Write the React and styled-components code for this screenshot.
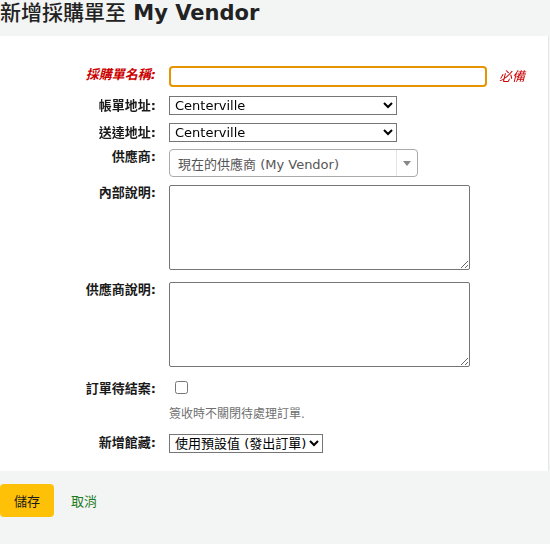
import React from "react";
import styled, { createGlobalStyle } from "styled-components";

const Global = createGlobalStyle`
  html, body { margin: 0; padding: 0; background: #f3f4f4; }
  body { font-family: "DejaVu Sans", "Noto Sans CJK TC", sans-serif; color: #1a1a1a; font-size: 13px; }
`;

const Page = styled.div`
  width: 550px;
  height: 544px;
  background: #f3f4f4;
  overflow: hidden;
`;

const Title = styled.h1`
  margin: 0;
  height: 36px;
  box-sizing: border-box;
  font-size: 21px;
  line-height: 26px;
  font-weight: bold;
  color: #222;
  white-space: nowrap;
  font-family: "DejaVu Sans", "Noto Sans CJK TC", sans-serif;
`;

const Cjk = styled.span`
  font-weight: 500;
`;

const Panel = styled.div`
  background: #fff;
  border-right: 1px solid #e6e6e6;
  width: 549px;
  height: 435px;
  box-sizing: border-box;
  padding-top: 30px;
`;

const Row = styled.div`
  display: flex;
  align-items: flex-start;
  margin-top: ${(p) => p.$mt || 0}px;
`;

const Label = styled.label`
  width: 156px;
  flex: none;
  text-align: right;
  font-weight: bold;
  font-size: 13px;
  line-height: 15px;
  padding-top: ${(p) => p.$pt ?? 0}px;
  margin-right: 13px;
  color: ${(p) => (p.$required ? "#cc0000" : "#1a1a1a")};
  font-style: ${(p) => (p.$required ? "italic" : "normal")};
`;

const TextInput = styled.input`
  width: 318px;
  height: 21px;
  box-sizing: border-box;
  border: 2px solid #e69500;
  border-radius: 4px;
  outline: none;
  padding: 0 2px;
  font: 13px "DejaVu Sans", sans-serif;
  caret-color: #b00;
`;

const Required = styled.span`
  color: #cc0000;
  font-style: italic;
  font-size: 13px;
  margin-left: 12px;
  line-height: 21px;
`;

const Select = styled.select`
  width: ${(p) => p.$w}px;
  height: 19px;
  font: 13px "DejaVu Sans", "Noto Sans CJK TC", sans-serif;
  color: #000;
  border: 1px solid #767676;
  border-radius: 0;
  background: #fff;
  padding: 0 0 0 1px;
`;

const Combo = styled.div`
  width: 249px;
  height: 28px;
  box-sizing: border-box;
  border: 1px solid #aaa;
  border-radius: 4px;
  display: flex;
  align-items: center;
  color: #555;
  font-size: 13px;
`;

const ComboText = styled.span`
  flex: 1;
  padding-left: 8px;
`;

const ComboArrow = styled.span`
  width: 20px;
  height: 26px;
  border-left: 1px solid #e4e4e4;
  display: flex;
  align-items: center;
  justify-content: center;
  &::after {
    content: "";
    border-left: 4px solid transparent;
    border-right: 4px solid transparent;
    border-top: 5px solid #888;
  }
`;

const TextArea = styled.textarea`
  width: 301px;
  height: 85px;
  box-sizing: border-box;
  border: 1px solid #767676;
  border-radius: 2px;
  margin: 0;
  font: 13px "DejaVu Sans", sans-serif;
`;

const Check = styled.input`
  width: 13px;
  height: 13px;
  margin: 0 0 0 6px;
`;

const Hint = styled.div`
  margin-left: 169px;
  margin-top: 11px;
  color: #6f6f6f;
  font-size: 12px;
  line-height: 15px;
`;

const Footer = styled.div`
  display: flex;
  align-items: center;
  padding-top: 13px;
`;

const SaveButton = styled.button`
  width: 54px;
  height: 33px;
  background: #ffc107;
  border: none;
  border-radius: 4px;
  font: 13px "DejaVu Sans", "Noto Sans CJK TC", sans-serif;
  color: #1a1a1a;
  padding: 0;
`;

const Cancel = styled.a`
  color: #1d7a1d;
  font-size: 13px;
  margin-left: 17px;
  text-decoration: none;
`;

export default function App() {
  return (
    <Page>
      <Global />
      <Title>
        <Cjk>新增採購單至</Cjk> My Vendor
      </Title>
      <Panel>
        <Row>
          <Label $required $pt={1}>採購單名稱:</Label>
          <TextInput autoFocus defaultValue="" />
          <Required>必備</Required>
        </Row>
        <Row $mt={9}>
          <Label $pt={2}>帳單地址:</Label>
          <Select $w={228}>
            <option>Centerville</option>
          </Select>
        </Row>
        <Row $mt={8}>
          <Label $pt={2}>送達地址:</Label>
          <Select $w={228}>
            <option>Centerville</option>
          </Select>
        </Row>
        <Row $mt={7}>
          <Label $pt={0}>供應商:</Label>
          <Combo>
            <ComboText>現在的供應商 (My Vendor)</ComboText>
            <ComboArrow />
          </Combo>
        </Row>
        <Row $mt={8}>
          <Label $pt={0}>內部說明:</Label>
          <TextArea />
        </Row>
        <Row $mt={12}>
          <Label $pt={0}>供應商說明:</Label>
          <TextArea />
        </Row>
        <Row $mt={14}>
          <Label $pt={0}>訂單待結案:</Label>
          <Check type="checkbox" />
        </Row>
        <Hint>簽收時不關閉待處理訂單.</Hint>
        <Row $mt={12}>
          <Label $pt={1}>新增館藏:</Label>
          <Select $w={154}>
            <option>使用預設值 (發出訂單)</option>
          </Select>
        </Row>
      </Panel>
      <Footer>
        <SaveButton>儲存</SaveButton>
        <Cancel href="#">取消</Cancel>
      </Footer>
    </Page>
  );
}
